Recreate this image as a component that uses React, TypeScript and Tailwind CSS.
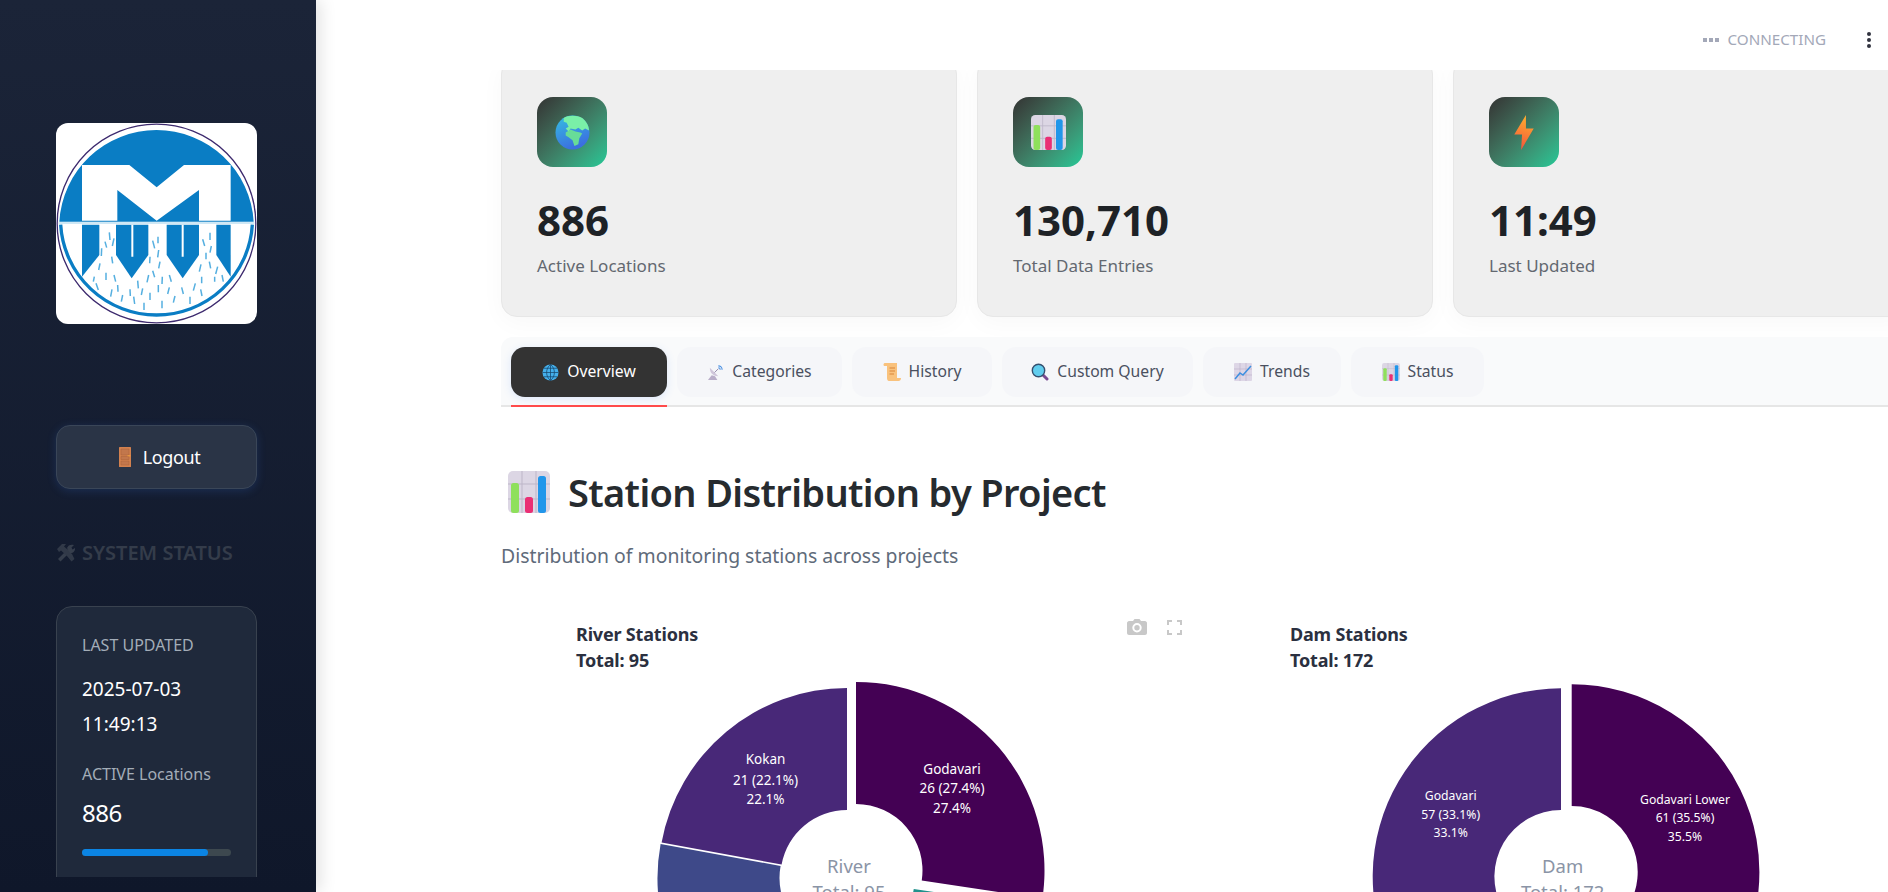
import type { ReactNode } from "react";

// angle is clockwise from 12 o'clock, same as plotly pies
function slice(cx: number, cy: number, r: number, ri: number, a0: number, a1: number) {
  const pt = (rad: number, a: number) => {
    const t = (a * Math.PI) / 180;
    return `${(cx + rad * Math.sin(t)).toFixed(2)} ${(cy - rad * Math.cos(t)).toFixed(2)}`;
  };
  const large = a1 - a0 > 180 ? 1 : 0;
  return `M${pt(r, a0)}A${r} ${r} 0 ${large} 1 ${pt(r, a1)}L${pt(ri, a1)}A${ri} ${ri} 0 ${large} 0 ${pt(ri, a0)}Z`;
}

const drops: number[][] = [
  [328,457,330,480],[315,485,320,503],[342,475,337,498],[305,505,304,528],[300,550,296,570],[335,530,338,550],
  [318,578,318,600],[342,585,347,605],[283,590,280,605],[288,610,295,630],[336,628,332,650],[353,615,354,635],
  [368,645,364,665],[390,628,391,648],[401,650,404,672],[413,602,415,625],[428,625,424,645],[432,668,432,690],
  [450,638,450,660],[446,585,441,607],[458,572,464,592],[450,530,449,550],[480,545,476,565],[476,510,473,532],
  [458,482,464,505],[474,470,474,490],[487,590,486,612],[508,585,514,605],[475,615,475,637],[508,622,503,642],
  [525,648,520,668],[486,662,486,685],[545,622,550,642],[570,650,570,672],[586,610,580,632],[605,590,605,610],
  [602,628,606,648],[603,553,598,575],[630,458,630,480],[608,478,614,498],[634,498,630,518],[618,518,618,538],
  [628,545,632,565],[653,560,647,582],[644,590,644,605],[666,585,670,605],
];

function Logo() {
  return (
    <svg viewBox="168 129 603 603" className="h-[201px] w-[201px] rounded-xl bg-white">
      <circle cx="469.5" cy="430.5" r="298" fill="#fff" stroke="#3d2a6e" strokeWidth="4" />
      <path d="M178 425A292 292 0 0 1 761 425Z" fill="#0a7dc4" />
      <path d="M182 434A288 288 0 0 0 757 434" fill="none" stroke="#0a7dc4" strokeWidth="10" />
      <path d="M246 255H388L470 322L552 255H692V422H597V330L470 422L352 330V422H246Z" fill="#fff" />
      <path d="M176 429H763" stroke="#bfe0f2" strokeWidth="5" />
      <path d="M246 434H298V525L246 590Z" fill="#0a7dc4" />
      <path d="M649 434H692V590L649 525Z" fill="#0a7dc4" />
      <path d="M348 434H445V525L395 595L348 525Z" fill="#0a7dc4" />
      <path d="M500 434H597V525L548 595L500 525Z" fill="#0a7dc4" />
      <path d="M397 434V530M548 434V530" stroke="#fff" strokeWidth="6" />
      {drops.map((d, i) => (
        <line key={i} x1={d[0]} y1={d[1]} x2={d[2]} y2={d[3]} stroke="#55afe0" strokeWidth="4.5" />
      ))}
    </svg>
  );
}

function ChartEmoji({ className }: { className: string }) {
  return (
    <svg viewBox="0 0 42 42" className={className}>
      <rect x="0" y="0" width="42" height="42" rx="5" fill="#dcd6e4" />
      <path d="M0 13H42M0 28H42M14 0V42M28 0V42" stroke="#bdb6c8" strokeWidth="1" />
      <rect x="3" y="12" width="8" height="30" rx="2.5" fill="#8fe05c" />
      <rect x="17" y="26" width="8" height="16" rx="2.5" fill="#ea2f74" />
      <rect x="30" y="5" width="8" height="37" rx="2.5" fill="#2196ea" />
    </svg>
  );
}

function EarthEmoji({ className }: { className: string }) {
  return (
    <svg viewBox="0 0 36 36" className={className}>
      <defs>
        <linearGradient id="sea" x1="0" y1="0" x2="0.4" y2="1">
          <stop offset="0" stopColor="#35c0e0" />
          <stop offset="1" stopColor="#3b6fe0" />
        </linearGradient>
      </defs>
      <circle cx="18" cy="18" r="17.5" fill="url(#sea)" />
      <path d="M9 3C13 0 23 0 28 3C33 7 35 12 35 16L31 14L28 16L24 13L21 15L16 14L14 17L11 14L14 12L12 8L9 7Z" fill="#7af0a8" />
      <path d="M11 18L16 15L21 17L26 18L28 19L25 24L24 30L20 32L18 26L14 23L11 21Z" fill="#68dc98" />
    </svg>
  );
}

function BoltEmoji({ className }: { className: string }) {
  return (
    <svg viewBox="0 0 20 36" className={className}>
      <defs>
        <linearGradient id="bolt" x1="0.6" y1="0" x2="0.4" y2="1">
          <stop offset="0" stopColor="#ffb02e" />
          <stop offset="1" stopColor="#f4543c" />
        </linearGradient>
      </defs>
      <path d="M12 0L0 20H8L7 36L20 14H12Z" fill="url(#bolt)" />
    </svg>
  );
}

function DoorEmoji() {
  return (
    <svg viewBox="0 0 12 20" className="h-5 w-3">
      <rect width="12" height="20" rx="0.5" fill="#d2814f" />
      <path d="M2 2H10V8H2ZM2 9.5H10V12.5H2ZM2 14H10V18H2Z" fill="#c2774c" stroke="#a9623b" strokeWidth="0.5" />
      <rect x="8.5" y="8.3" width="3" height="1" fill="#f0a23c" />
    </svg>
  );
}

function ToolsEmoji() {
  return (
    <svg viewBox="0 0 20 20" className="h-5 w-5 opacity-90">
      <path d="M2 16L12 6L14.5 8.5L4.5 18.5Z" fill="#3a4250" />
      <path d="M1 6L6 1H10L8 3.5L11 6L16 11L18.5 16L15.5 18.5L11 13L5 7.5L3 9Z" fill="#353d4b" />
      <path d="M11 5C12 2 15 1 18 2L15.5 4.5L16.5 6.5L19 5C19.5 8 17 10.5 14 10Z" fill="#3a4250" />
    </svg>
  );
}

function WebGlobe() {
  return (
    <svg viewBox="0 0 18 18" className="h-[17px] w-[17px]">
      <circle cx="9" cy="9" r="8.5" fill="#45b0ec" />
      <path d="M9 .5V17.5M.5 9H17.5M2 4.5H16M2 13.5H16M9 .5C3.5 5 3.5 13 9 17.5M9 .5C14.5 5 14.5 13 9 17.5" fill="none" stroke="#17466b" strokeWidth="0.8" />
    </svg>
  );
}

function DishEmoji() {
  return (
    <svg viewBox="0 0 18 18" className="h-[17px] w-[17px]">
      <path d="M3 4C3 10 7 13 12 13Z" fill="#cfc6da" />
      <path d="M5 12L1 17H11L8.5 13Z" fill="#b9aec9" />
      <path d="M8 9L12 5" stroke="#8f84a6" strokeWidth="1" />
      <path d="M12 2A4 4 0 0 1 16 6M12 4A2 2 0 0 1 14 6" fill="none" stroke="#4a90e2" strokeWidth="1.2" />
    </svg>
  );
}

function ScrollEmoji() {
  return (
    <svg viewBox="0 0 18 18" className="h-[18px] w-[18px]">
      <path d="M2 0H14V15H18C18 17 17 18 15.500 18H6C4.500 18 4 16.500 4 15V3H1C0 2 .5 0 2 0Z" fill="#f9c27d" />
      <path d="M6.500 5H12M6.500 8H12M6.500 11H11" stroke="#d9853b" strokeWidth="1" />
    </svg>
  );
}

function LensEmoji() {
  return (
    <svg viewBox="0 0 18 18" className="h-[18px] w-[18px]">
      <path d="M11 11L16 16" stroke="#7a4a91" strokeWidth="3" strokeLinecap="round" />
      <circle cx="7.5" cy="7.5" r="6.2" fill="#61cdee" stroke="#35506f" strokeWidth="1.4" />
    </svg>
  );
}

function TrendEmoji() {
  return (
    <svg viewBox="0 0 18 18" className="h-[18px] w-[18px]">
      <rect width="18" height="18" rx="1" fill="#ddd6e6" />
      <path d="M0 6H18M0 12H18M6 0V18M12 0V18" stroke="#bfb6cb" strokeWidth="0.7" />
      <path d="M1 16L6 10L9 12L17 3" fill="none" stroke="#3d8fe0" strokeWidth="1.5" />
    </svg>
  );
}

function StatCard({ icon, value, label }: { icon: ReactNode; value: string; label: string }) {
  return (
    <div className="h-[259px] rounded-2xl border border-[#e7e7e7] bg-[#efefef] px-[35px] pt-[38px] shadow-[0_6px_24px_rgba(0,0,0,0.03)]">
      <div className="flex h-[70px] w-[70px] items-center justify-center rounded-2xl bg-linear-to-br from-[#333333] to-[#20c997]">
        {icon}
      </div>
      <div className="mt-[23px] text-[42px] leading-[60px] font-bold text-[#1e2226]">{value}</div>
      <div className="mt-[4px] text-[17px] leading-6 text-[#636870]">{label}</div>
    </div>
  );
}

const tabs: { label: string; width: string; icon: ReactNode }[] = [
  { label: "Categories", width: "w-[165px]", icon: <DishEmoji /> },
  { label: "History", width: "w-[140px]", icon: <ScrollEmoji /> },
  { label: "Custom Query", width: "w-[191px]", icon: <LensEmoji /> },
  { label: "Trends", width: "w-[138px]", icon: <TrendEmoji /> },
  { label: "Status", width: "w-[133px]", icon: <ChartEmoji className="h-[18px] w-[18px]" /> },
];

function PieLabel({ x, ys, lines, size }: { x: number; ys: number[]; lines: string[]; size: string }) {
  return (
    <text textAnchor="middle" className={`fill-white ${size}`}>
      {lines.map((l, i) => (
        <tspan key={i} x={x} y={ys[i]}>
          {l}
        </tspan>
      ))}
    </text>
  );
}

function ChartTitle({ x, lines }: { x: number; lines: string[] }) {
  return (
    <text className="fill-[#2b3040] text-[18px] font-bold tracking-[-0.01em]">
      <tspan x={x} y="641">{lines[0]}</tspan>
      <tspan x={x} y="667">{lines[1]}</tspan>
    </text>
  );
}

function CenterLabel({ x, lines }: { x: number; lines: string[] }) {
  return (
    <text textAnchor="middle" className="fill-[#8a94a6] text-[18.5px]">
      <tspan x={x} y="873">{lines[0]}</tspan>
      <tspan x={x} y="899">{lines[1]}</tspan>
    </text>
  );
}

function RiverChart() {
  return (
    <svg viewBox="501 600 694 292" className="h-[292px] w-[694px]">
      <ChartTitle x={576} lines={["River Stations", "Total: 95"]} />
      <path d={slice(848, 879, 188.5, 66.5, 98.6, 150)} fill="#21918c" />
      <path d={slice(846, 878, 188.5, 66.5, 230, 280.4)} fill="#3e4989" />
      <path d={slice(847, 876.5, 188.5, 66.5, 280.4, 360)} fill="#482878" />
      <path d={slice(856, 870.5, 188.5, 66.5, 0, 98.6)} fill="#440154" />
      <PieLabel x={765.5} ys={[764, 785, 804]} lines={["Kokan", "21 (22.1%)", "22.1%"]} size="text-[13.5px]" />
      <PieLabel x={952} ys={[774, 793, 813]} lines={["Godavari", "26 (27.4%)", "27.4%"]} size="text-[13.5px]" />
      <CenterLabel x={849} lines={["River", "Total: 95"]} />
    </svg>
  );
}

function DamChart() {
  return (
    <svg viewBox="1215 600 694 292" className="h-[292px] w-[694px]">
      <ChartTitle x={1290} lines={["Dam Stations", "Total: 172"]} />
      <path d={slice(1561, 876.6, 188.3, 66.6, 241, 360)} fill="#482878" />
      <path d={slice(1571.7, 872, 187.7, 66, 0, 127.8)} fill="#440154" />
      <PieLabel x={1450.7} ys={[800, 818.5, 836.5]} lines={["Godavari", "57 (33.1%)", "33.1%"]} size="text-[12.2px]" />
      <PieLabel x={1685} ys={[804, 822, 840.5]} lines={["Godavari Lower", "61 (35.5%)", "35.5%"]} size="text-[12.2px]" />
      <CenterLabel x={1562.7} lines={["Dam", "Total: 172"]} />
    </svg>
  );
}

export default function App() {
  return (
    <div className="flex h-screen overflow-hidden bg-white font-['Noto_Sans',sans-serif]">
      {/* sidebar */}
      <aside className="relative z-20 h-full w-[316px] shrink-0 bg-linear-to-b from-[#1b2438] to-[#0f172a] shadow-[4px_0_16px_rgba(0,0,0,0.12)]">
        <div className="h-[877px] overflow-hidden pt-[123px] pl-14">
          <div className="flex w-[201px] flex-col">
            <Logo />
            <button className="mt-[101px] flex h-[64px] items-center justify-center gap-3 rounded-[14px] border border-[#3a4658] bg-[#2a3446] pl-[6px] text-[18px] tracking-[-0.02em] text-white shadow-[0_2px_10px_rgba(59,130,246,0.18)]">
              <DoorEmoji />
              Logout
            </button>
            <div className="mt-[50px] flex h-7 items-center gap-[6px] text-[20px] font-semibold whitespace-nowrap text-[#343c4a]">
              <ToolsEmoji />
              SYSTEM STATUS
            </div>
            <div className="mt-[39px] h-[320px] rounded-2xl border border-[#39424f] bg-[#1f293b] px-[25px] pt-[26px]">
              <div className="text-[16px] leading-6 whitespace-nowrap text-[#a3adb8]">LAST UPDATED</div>
              <div className="mt-[15px] text-[19px] leading-[35px] text-white">
                2025-07-03
                <br />
                11:49:13
              </div>
              <div className="mt-[20px] text-[16px] leading-6 whitespace-nowrap text-[#a3adb8]">ACTIVE Locations</div>
              <div className="mt-[10px] text-[24px] leading-[34px] tracking-[-0.02em] text-white">886</div>
              <div className="mt-[19px] h-[7px] w-[149px] rounded-full bg-[#3d484f]">
                <div className="h-full w-[126px] rounded-full bg-[#0b84e3]" />
              </div>
            </div>
          </div>
        </div>
      </aside>

      {/* main */}
      <main className="h-full min-w-0 flex-1 overflow-hidden">
        <header className="relative z-10 flex h-[70px] items-center justify-end bg-white pt-[9px] pr-[17px]">
          <div className="flex gap-[2px]">
            <span className="h-1 w-1 bg-[#a3a8b8]" />
            <span className="h-1 w-1 bg-[#a3a8b8]" />
            <span className="h-1 w-1 bg-[#a3a8b8]" />
          </div>
          <span className="ml-[9px] text-[15.2px] text-[#a3a8b8]">CONNECTING</span>
          <div className="ml-[41px] flex flex-col gap-[2px]">
            <span className="h-1 w-1 rounded-full bg-[#31333f]" />
            <span className="h-1 w-1 rounded-full bg-[#31333f]" />
            <span className="h-1 w-1 rounded-full bg-[#31333f]" />
          </div>
        </header>

        <div className="-mt-[12px] w-[1593px] pl-[185px]">
          <div className="grid grid-cols-3 gap-5">
            <StatCard icon={<EarthEmoji className="h-[35px] w-[35px]" />} value="886" label="Active Locations" />
            <StatCard icon={<ChartEmoji className="h-[35px] w-[35px]" />} value="130,710" label="Total Data Entries" />
            <StatCard icon={<BoltEmoji className="h-[35px] w-[20px]" />} value="11:49" label="Last Updated" />
          </div>

          <div className="mt-[20px] flex h-[70px] items-start gap-[10px] rounded-t-xl border-b-2 border-[#e6e6e6] bg-[#f9fafb] pt-[10px] pl-[10px] text-[15.7px]">
            <div className="flex w-[156px] flex-col">
              <div className="flex h-[50px] shrink-0 items-center justify-center gap-2 rounded-[14px] bg-[#333333] text-white shadow-[0_2px_8px_rgba(59,130,246,0.15)]">
                <WebGlobe />
                Overview
              </div>
              <div className="mt-2 h-[2px] shrink-0 bg-[#ff4b4b]" />
            </div>
            {tabs.map((t) => (
              <div key={t.label} className={`flex h-[50px] items-center justify-center gap-2 rounded-[14px] bg-[#f5f6f9] text-[#4a5060] ${t.width}`}>
                {t.icon}
                {t.label}
              </div>
            ))}
          </div>

          <div className="mt-[57px] flex h-14 items-center gap-[18px] pl-[7px]">
            <ChartEmoji className="h-[42px] w-[42px]" />
            <h1 className="text-[38px] leading-[56px] font-semibold tracking-[-0.017em] text-[#262b2f]">Station Distribution by Project</h1>
          </div>
          <p className="mt-[22px] text-[19.4px] leading-7 text-[#5f6b7a]">Distribution of monitoring stations across projects</p>

          <div className="mt-[30px] grid grid-cols-2 gap-5">
            <div className="relative">
              <RiverChart />
              <div className="absolute top-[19px] right-[13px] flex items-center gap-5">
                <svg viewBox="0 0 20 16" className="h-4 w-5">
                  <path d="M6 2L7.5 0H12.5L14 2H18C19 2 20 3 20 4V14C20 15 19 16 18 16H2C1 16 0 15 0 14V4C0 3 1 2 2 2ZM10 13.5A4.7 4.7 0 1 0 10 4.100A4.7 4.700 0 1 0 10 13.500ZM10 11.500A2.700 2.700 0 1 1 10 6.100A2.700 2.700 0 1 1 10 11.500Z" fill="#c8c8c8" fillRule="evenodd" />
                </svg>
                <svg viewBox="0 0 15 15" className="h-[15px] w-[15px]">
                  <path d="M1 5V1H5M10 1H14V5M14 10V14H10M5 14H1V10" fill="none" stroke="#c8c8c8" strokeWidth="2" />
                </svg>
              </div>
            </div>
            <DamChart />
          </div>
        </div>
      </main>
    </div>
  );
}
